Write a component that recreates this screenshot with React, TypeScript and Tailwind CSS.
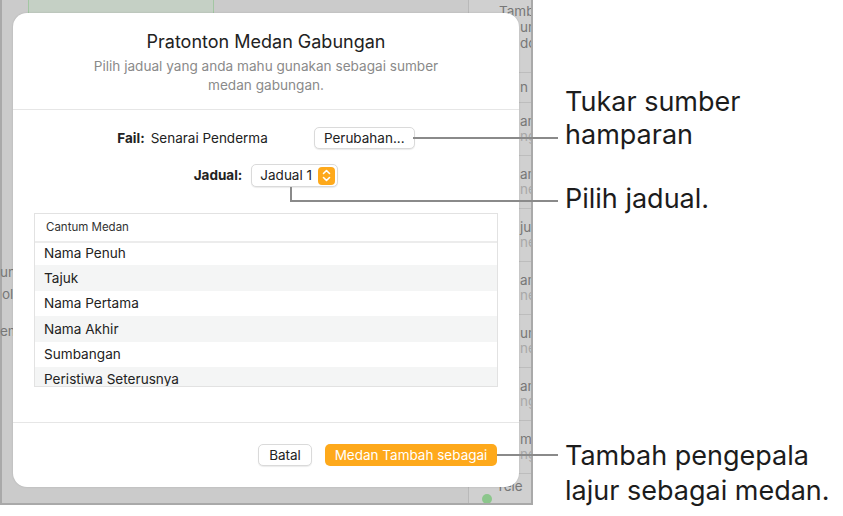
import React from 'react';

const fields = ['Nama Penuh', 'Tajuk', 'Nama Pertama', 'Nama Akhir', 'Sumbangan', 'Peristiwa Seterusnya'];

const sideRows: [string, string][] = [
  ['am', 'ng'],
  ['am', 'ne'],
  ['ju', 'ne'],
  ['am', 'ne'],
  ['um', 'ne'],
  ['am', 'ng'],
  ['m', 'ng'],
];

function Stepper() {
  return (
    <span className="flex h-[18px] w-[17px] items-center justify-center rounded-[4px] bg-[#fea91b]">
      <svg width="9" height="13" viewBox="0 0 9 13" fill="none" stroke="white" strokeWidth="1.6" strokeLinecap="round" strokeLinejoin="round">
        <path d="M1.5 4.5 4.5 1.5 7.5 4.5" />
        <path d="M1.5 8.5 4.5 11.5 7.5 8.5" />
      </svg>
    </span>
  );
}

function Backdrop() {
  return (
    <div className="flex h-[505px] w-[533px] border-b-2 border-l-2 border-r-2 border-[#a9a9a9] bg-[#cbcbcb] text-[13.5px] text-[#777]">
      {/* left area */}
      <div className="flex w-[466px] flex-col">
        <div className="ml-[26px] h-[13px] w-[186px] border-x border-[#a3c6a3] bg-[#c5d0c5]" />
        <div className="mt-[250px] flex flex-col leading-[18px]">
          <span className="-ml-[2px] h-[22px]">un</span>
          <span className="h-[37px]">ol</span>
          <span className="-ml-[2px]">em</span>
        </div>
      </div>
      {/* right list */}
      <div className="flex w-[63px] flex-col overflow-hidden border-l border-[#b9b9b9] bg-[#d0d0d0]">
        <div className="flex h-[73px] shrink-0 flex-col border-b border-[#bdbdbd] pl-[30px] pt-[3px] leading-[16px]">
          <span>Tamb</span>
          <span className="pl-[21px]">un</span>
          <span className="pl-[21px]">do</span>
        </div>
        <div className="flex h-[30px] shrink-0 items-center border-b border-[#bdbdbd] pl-[51px]">
          <span className="whitespace-nowrap">n M</span>
        </div>
        {sideRows.map(([a, b], i) => (
          <div key={i} className="flex h-[53px] shrink-0 flex-col justify-center border-b border-[#bdbdbd] pl-[51px] leading-[15px]">
            <span>{a}</span>
            <span className="text-[#a8a8a8]">{b}</span>
          </div>
        ))}
        <div className="flex shrink-0 items-start gap-[4px] pl-[13px] pt-[2px]">
          <span className="mt-[18px] h-[10px] w-[10px] shrink-0 rounded-full bg-[#8cc68c]" />
          <span>Tele</span>
        </div>
      </div>
    </div>
  );
}

function Dialog() {
  return (
    <div className="flex h-[474px] w-[506px] flex-col rounded-[14px] bg-white text-[#222] shadow-[0_0_2px_rgba(0,0,0,0.15)]">
      <div className="flex h-[97px] flex-col items-center border-b border-[#e6e6e6] pt-[18px]">
        <h1 className="text-[18px] leading-[22px] text-[#222]">Pratonton Medan Gabungan</h1>
        <p className="mt-[4px] w-[380px] text-center text-[13.6px] leading-[19px] text-[#8a8a8a]">
          Pilih jadual yang anda mahu gunakan sebagai sumber medan gabungan.
        </p>
      </div>

      <div className="flex flex-col px-[21px] pt-[17px]">
        <div className="flex items-center justify-center text-[13.5px]">
          <span className="font-bold">Fail:</span>
          <span className="ml-[6px]">Senarai Penderma</span>
          <button className="ml-[46px] flex h-[22px] w-[101px] items-center justify-center rounded-[5px] border border-[#dadada] bg-white text-[13.5px] shadow-[0_1px_1px_rgba(0,0,0,0.08)]">
            Perubahan...
          </button>
        </div>

        <div className="mt-[15px] flex items-center justify-center text-[13.5px]">
          <span className="font-bold">Jadual:</span>
          <div className="ml-[9px] flex h-[23px] w-[87px] items-center justify-between rounded-[5px] border border-[#dadada] bg-white pl-[8px] pr-[2px] shadow-[0_1px_1px_rgba(0,0,0,0.08)]">
            <span>Jadual 1</span>
            <Stepper />
          </div>
        </div>

        <div className="mt-[26px] flex h-[174px] flex-col border border-[#e2e2e2]">
          <div className="flex h-[29px] shrink-0 items-center border-b-2 border-[#ececec] pl-[11px] text-[11.5px] text-[#333]">
            Cantum Medan
          </div>
          <div className="overflow-hidden">
            <div className="-mt-[3px] flex flex-col">
              {fields.map((f, i) => (
                <div
                  key={f}
                  className={`flex h-[25.4px] shrink-0 items-center pl-[9px] text-[13.6px] ${i % 2 === 1 ? 'bg-[#f4f5f5]' : 'bg-white'}`}
                >
                  {f}
                </div>
              ))}
            </div>
          </div>
        </div>
      </div>

      <div className="mt-[35px] flex items-center justify-end gap-[13px] border-t border-[#e6e6e6] px-[22px] pt-[21px]">
        <button className="flex h-[22px] w-[54px] items-center justify-center rounded-[5px] border border-[#dadada] bg-white text-[13.5px] shadow-[0_1px_1px_rgba(0,0,0,0.08)]">
          Batal
        </button>
        <button className="flex h-[22px] w-[172px] items-center justify-center rounded-[5px] bg-[#fea91b] text-[13.5px] text-white">
          Medan Tambah sebagai
        </button>
      </div>
    </div>
  );
}

export default function App() {
  return (
    <div className="relative h-[516px] w-[843px] overflow-hidden bg-white font-['Inter','Noto_Sans',sans-serif]">
      <Backdrop />

      <div className="absolute left-[13px] top-[13px]">
        <Dialog />
      </div>

      {/* callout lines */}
      <div className="absolute left-[413px] top-[137px] h-[2px] w-[145px] bg-[#8a8a8a]" />
      <div className="absolute left-[290px] top-[187px] h-[15px] w-[2px] bg-[#8a8a8a]" />
      <div className="absolute left-[290px] top-[200px] h-[2px] w-[268px] bg-[#8a8a8a]" />
      <div className="absolute left-[497px] top-[454px] h-[2px] w-[61px] bg-[#8a8a8a]" />

      {/* callout labels */}
      <div className="absolute left-[565px] top-[85px] text-[27px] leading-[33px] text-[#1c1c1c]">
        Tukar sumber
        <br />
        hamparan
      </div>
      <div className="absolute left-[565px] top-[182px] text-[27px] leading-[33px] text-[#1c1c1c]">
        Pilih jadual.
      </div>
      <div className="absolute left-[565px] top-[438px] text-[27px] leading-[35px] text-[#1c1c1c]">
        Tambah pengepala
        <br />
        lajur sebagai medan.
      </div>
    </div>
  );
}
